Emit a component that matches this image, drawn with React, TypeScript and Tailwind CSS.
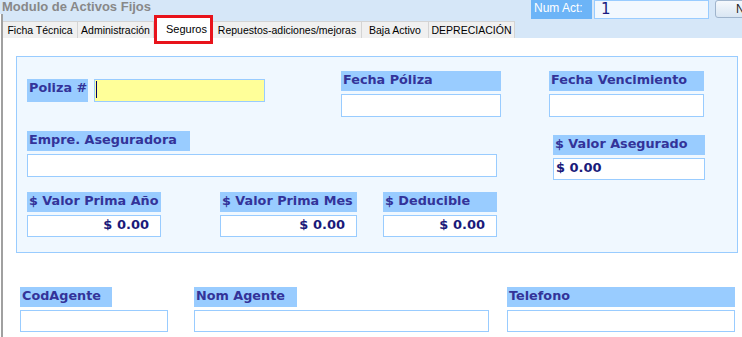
import React from 'react'

const verdana = "[font-family:'DejaVu_Sans',Verdana,sans-serif]"
const tahoma = "[font-family:'Liberation_Sans',Tahoma,Arial,sans-serif]"

const labelCls = `h-[20px] bg-[#99ccff] pl-[2px] text-[12.8px] leading-[17px] font-bold text-[#333399] whitespace-nowrap overflow-hidden ${verdana}`

interface FieldProps {
  label: string
  labelW: number | string
  w: number
  h?: number
  value?: string
  right?: boolean
}

function Field({ label, labelW, w, h = 23, value, right }: FieldProps) {
  return (
    <div className="flex flex-col gap-[3px]" style={{ width: w }}>
      <div className={labelCls} style={{ width: labelW }}>{label}</div>
      <div
        className={`border border-[#99ccff] bg-white px-[2px] text-[13px] leading-[17px] font-bold text-[#1a1a7a] ${verdana} ${right ? 'text-right pr-[11px]' : ''}`}
        style={{ height: h }}
      >
        {value}
      </div>
    </div>
  )
}

const tabs = [
  { name: 'Ficha Técnica', w: 75 },
  { name: 'Administración', w: 76 },
  { name: 'Seguros', w: 59, active: true },
  { name: 'Repuestos-adiciones/mejoras', w: 149 },
  { name: 'Baja Activo', w: 67 },
  { name: 'DEPRECIACIÓN', w: 86 },
]

export default function App() {
  return (
    <div className="w-[742px] h-[337px] overflow-hidden bg-white">
      {/* cabecera */}
      <div className="flex h-[14px] bg-[#d6e7f8]">
        <div className={`flex-1 pl-[2px] text-[13px] leading-[14px] font-bold text-[#888888] ${tahoma}`}>
          Modulo de Activos Fijos
        </div>
        <div className="relative z-10 flex w-[211px] h-[19px] overflow-hidden flex-none">
          <div className={`flex-none w-[61px] h-[19px] bg-[#6cb4f7] pl-[3px] pt-[1px] text-[12px] leading-[15px] text-white whitespace-nowrap ${tahoma}`}>
            Num Act:
          </div>
          <div className="flex-none ml-[2px] w-[115px] h-[19px] border border-[#99ccff] bg-[#f2f8fe] pl-[6px] text-[15px] leading-[17px] text-[#1a1a80] [font-family:'DejaVu_Sans',Tahoma,sans-serif]">
            1
          </div>
          <div className={`flex-none ml-[6px] w-[60px] h-[18px] rounded-[3px] border border-[#9fb4cc] bg-gradient-to-b from-[#f6f9fc] to-[#d9e6f3] pl-[20px] text-[12px] leading-[16px] text-[#222] ${tahoma}`}>
            Nuevo
          </div>
        </div>
      </div>

      <div className="ml-px border-l-2 border-[#a0a0a0] h-[323px]">
        {/* pestañas */}
        <div className="flex items-end h-[24px] bg-[#d6e7f8]">
          {tabs.map((t) =>
            t.active ? (
              <div
                key={t.name}
                className="relative z-10 flex-none h-[29px] mb-[-6px] border-[3px] border-[#e8131b] bg-white"
                style={{ width: t.w }}
              >
                <div className={`pl-[9px] pt-[4px] text-[11px] leading-[14px] text-black ${tahoma}`}>{t.name}</div>
              </div>
            ) : (
              <div
                key={t.name}
                className={`flex-none h-[17px] border-t border-r border-[#d4d4d4] bg-[#f0f0f0] text-center text-[10.5px] leading-[16px] text-black whitespace-nowrap ${tahoma}`}
                style={{ width: t.w }}
              >
                {t.name}
              </div>
            )
          )}
        </div>

        {/* panel de seguros */}
        <div className="ml-[13px] mt-[18px] w-[722px] h-[197px] border border-[#99ccff] bg-[#f0f8ff] pl-[10px]">
          <div className="flex items-start mt-[14px]">
            <div className="flex mt-[8px] w-[238px]">
              <div className={`${labelCls} w-[61px] h-[23px]`}>Poliza #</div>
              <div className="ml-[6px] w-[171px] h-[23px] border border-[#99ccff] bg-[#ffff99] pl-px pt-px">
                <div className="w-px h-[17px] bg-[#000066]" />
              </div>
            </div>
            <div className="ml-[76px]">
              <Field label="Fecha Póliza" labelW={160} w={160} />
            </div>
            <div className="ml-[48px]">
              <Field label="Fecha Vencimiento" labelW={155} w={155} />
            </div>
          </div>

          <div className="flex items-start mt-[14px]">
            <Field label="Empre. Aseguradora" labelW={163} w={470} />
            <div className="ml-[56px] mt-[4px]">
              <Field label="$ Valor Asegurado" labelW={152} w={152} h={22} value="$ 0.00" />
            </div>
          </div>

          <div className="flex items-start mt-[12px]">
            <Field label="$ Valor Prima Año" labelW={134} w={134} h={22} value="$ 0.00" right />
            <div className="ml-[59px]">
              <Field label="$ Valor Prima Mes" labelW={137} w={137} h={22} value="$ 0.00" right />
            </div>
            <div className="ml-[26px]">
              <Field label="$ Deducible" labelW={114} w={114} h={22} value="$ 0.00" right />
            </div>
          </div>
        </div>

        {/* agente */}
        <div className="flex items-start ml-[17px] mt-[34px]">
          <Field label="CodAgente" labelW={92} w={148} h={22} />
          <div className="ml-[26px]">
            <Field label="Nom Agente" labelW={103} w={295} h={22} />
          </div>
          <div className="ml-[18px]">
            <Field label="Telefono" labelW={228} w={228} h={22} />
          </div>
        </div>
      </div>
    </div>
  )
}
